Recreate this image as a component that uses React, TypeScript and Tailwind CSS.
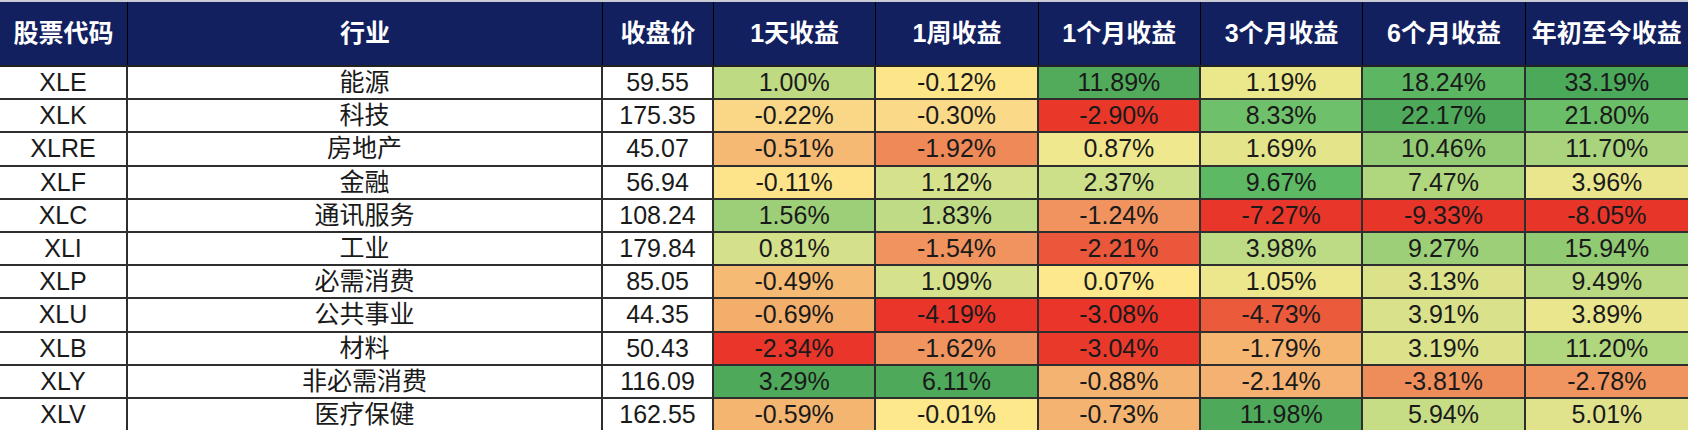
import React from 'react';

type Row = {
  code: string;
  sector: string;
  price: string;
  cells: [string, string][]; // [value, background]
};

const headers = ['股票代码', '行业', '收盘价', '1天收益', '1周收益', '1个月收益', '3个月收益', '6个月收益', '年初至今收益'];

const rows: Row[] = [
  { code: 'XLE', sector: '能源', price: '59.55', cells: [['1.00%', '#bedb84'], ['-0.12%', '#fde68a'], ['11.89%', '#52ab5a'], ['1.19%', '#ebe88c'], ['18.24%', '#5cb662'], ['33.19%', '#4ba95a']] },
  { code: 'XLK', sector: '科技', price: '175.35', cells: [['-0.22%', '#f9d786'], ['-0.30%', '#fad988'], ['-2.90%', '#e9382a'], ['8.33%', '#6fc06a'], ['22.17%', '#4eaa5a'], ['21.80%', '#6bbe68']] },
  { code: 'XLRE', sector: '房地产', price: '45.07', cells: [['-0.51%', '#f5b973'], ['-1.92%', '#ef8958'], ['0.87%', '#f0e88e'], ['1.69%', '#e4e58b'], ['10.46%', '#93ca74'], ['11.70%', '#a9d37c']] },
  { code: 'XLF', sector: '金融', price: '56.94', cells: [['-0.11%', '#fde38a'], ['1.12%', '#d6e18b'], ['2.37%', '#cbe088'], ['9.67%', '#5db963'], ['7.47%', '#b0d67e'], ['3.96%', '#eae68d']] },
  { code: 'XLC', sector: '通讯服务', price: '108.24', cells: [['1.56%', '#9ccf77'], ['1.83%', '#bfdb85'], ['-1.24%', '#f0935e'], ['-7.27%', '#e9362a'], ['-9.33%', '#e8352a'], ['-8.05%', '#e8352a']] },
  { code: 'XLI', sector: '工业', price: '179.84', cells: [['0.81%', '#d5e08a'], ['-1.54%', '#f0935e'], ['-2.21%', '#eb573a'], ['3.98%', '#bcdb84'], ['9.27%', '#9ccf77'], ['15.94%', '#90ca73']] },
  { code: 'XLP', sector: '必需消费', price: '85.05', cells: [['-0.49%', '#f5bb74'], ['1.09%', '#d6e18b'], ['0.07%', '#fde98b'], ['1.05%', '#ece78d'], ['3.13%', '#dbe28a'], ['9.49%', '#b8d981']] },
  { code: 'XLU', sector: '公共事业', price: '44.35', cells: [['-0.69%', '#f3ae6c'], ['-4.19%', '#e9352a'], ['-3.08%', '#e9352a'], ['-4.73%', '#eb5a3b'], ['3.91%', '#d9e28a'], ['3.89%', '#eae68d']] },
  { code: 'XLB', sector: '材料', price: '50.43', cells: [['-2.34%', '#e9352a'], ['-1.62%', '#f09560'], ['-3.04%', '#e9392b'], ['-1.79%', '#f5b672'], ['3.19%', '#dbe28a'], ['11.20%', '#b0d67e']] },
  { code: 'XLY', sector: '非必需消费', price: '116.09', cells: [['3.29%', '#4eaa5a'], ['6.11%', '#4eaa5a'], ['-0.88%', '#f4b370'], ['-2.14%', '#f5b171'], ['-3.81%', '#ef8d5a'], ['-2.78%', '#f09560']] },
  { code: 'XLV', sector: '医疗保健', price: '162.55', cells: [['-0.59%', '#f4b571'], ['-0.01%', '#fde88b'], ['-0.73%', '#f4b370'], ['11.98%', '#4eaa5a'], ['5.94%', '#c7dd85'], ['5.01%', '#e0e38b']] },
];

const grid = 'grid grid-cols-[128px_475px_111px_repeat(6,1fr)]';

export default function App() {
  return (
    <div
      className="w-[1688px] h-[430px] overflow-hidden bg-white"
      style={{ fontFamily: '"Liberation Sans", "Noto Sans CJK SC", sans-serif' }}
    >
      <div className="h-[2px] bg-[#c9ccd4]" />

      {/* 表头 */}
      <div className={`${grid} h-[65px] bg-[#13205f] border-b-2 border-[#222]`}>
        {headers.map((h, i) => (
          <div
            key={h}
            className={`flex items-center justify-center text-[25px] font-bold text-white ${i < headers.length - 1 ? 'border-r border-black' : ''}`}
          >
            {h}
          </div>
        ))}
      </div>

      {/* 数据行 */}
      {rows.map((r) => (
        <div key={r.code} className={`${grid} h-[33.2px] border-b-2 border-[#2e2e2e] text-[25px] text-[#1a1a1a] leading-none`}>
          <div className="flex items-center justify-center border-r-2 border-[#2e2e2e]">{r.code}</div>
          <div className="flex items-center justify-center border-r-2 border-[#2e2e2e]">{r.sector}</div>
          <div className="flex items-center justify-center border-r-2 border-[#2e2e2e]">{r.price}</div>
          {r.cells.map(([v, bg], j) => (
            <div
              key={j}
              className={`flex items-center justify-center ${j < 5 ? 'border-r-2 border-[#2e2e2e]' : ''}`}
              style={{ backgroundColor: bg }}
            >
              {v}
            </div>
          ))}
        </div>
      ))}
    </div>
  );
}
